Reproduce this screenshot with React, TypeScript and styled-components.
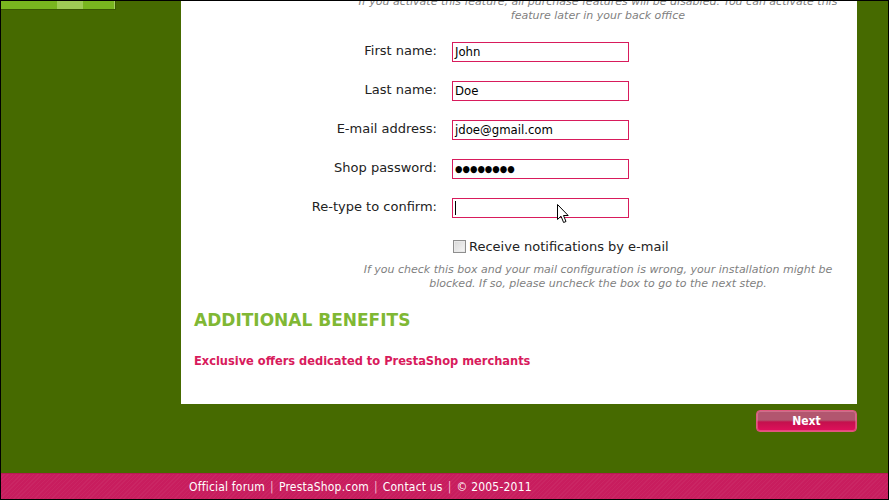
import React from "react";
import styled, { createGlobalStyle } from "styled-components";

const Global = createGlobalStyle`
  html, body { margin: 0; padding: 0; background: #466a00; }
  body { font-family: "DejaVu Sans", sans-serif; }
  * { box-sizing: border-box; }
`;

const Frame = styled.div`
  width: 889px;
  height: 500px;
  border: 1px solid #000;
  display: flex;
  flex-direction: column;
  background: #466a00;
  overflow: hidden;
`;

const Main = styled.div`
  flex: 1;
  display: grid;
  grid-template-columns: 180px 676px 1fr;
  align-items: start;
`;

const Sidebar = styled.div`
  display: flex;
  flex-direction: column;
`;

const StepBar = styled.div`
  width: 115px;
  height: 9px;
  display: flex;
  border-right: 1px solid #3a5800;
  border-bottom: 1px solid #3a5800;
`;

const StepSeg = styled.div<{ $w: number; $light?: boolean }>`
  width: ${(p) => p.$w}px;
  background: ${(p) => (p.$light ? "#9fcb55" : "#79b51f")};
  &:last-child { border-right: 1px solid #a6d060; }
`;

const Center = styled.div`
  display: flex;
  flex-direction: column;
`;

const Panel = styled.div`
  background: #fff;
  height: 409px;
  margin-top: -6px;
  padding: 0 0 0 13px;
  display: flex;
  flex-direction: column;
`;

const Note = styled.p`
  margin: 0 0 0 162px;
  width: 484px;
  text-align: center;
  font-style: italic;
  font-size: 11px;
  line-height: 14px;
  color: #7f7f7f;
`;

const Form = styled.div`
  display: flex;
  flex-direction: column;
  gap: 19px;
  margin-top: 19px;
`;

const Row = styled.div`
  display: flex;
  align-items: center;
  gap: 15px;
  height: 20px;
`;

const Label = styled.label`
  width: 243px;
  text-align: right;
  font-size: 13px;
  color: #222;
  padding-bottom: 3px;
`;

const Input = styled.div`
  position: relative;
  width: 177px;
  height: 20px;
  border: 1px solid #d81b5c;
  padding: 0 2px;
  font-family: "DejaVu Sans Condensed", "DejaVu Sans", sans-serif;
  font-size: 13px;
  line-height: 18px;
  color: #000;
  display: flex;
  align-items: center;
`;

const Dots = styled.span`
  font-size: 9.5px;
  letter-spacing: 0px;
`;

const Caret = styled.span`
  display: block;
  width: 1px;
  height: 14px;
  background: #000;
`;

const Cursor = styled.svg`
  position: absolute;
  left: 104px;
  top: 5px;
`;

const CheckRow = styled.div`
  display: flex;
  align-items: center;
  gap: 3px;
  margin: 21px 0 0 259px;
  font-size: 13px;
  color: #222;
`;

const Box = styled.span`
  width: 13px;
  height: 13px;
  border: 1px solid #8e8e8e;
  background: linear-gradient(135deg, #d8d8d8, #f6f6f6);
  box-shadow: inset 0 0 0 1px #e9e9e9;
`;

const NoteSmall = styled(Note)`
  margin-top: 9px;
`;

const Heading = styled.h2`
  margin: 19px 0 0 0;
  font-size: 17px;
  font-weight: bold;
  color: #80b834;
  line-height: 20px;
`;

const Offer = styled.p`
  margin: 23px 0 0 0;
  font-family: "DejaVu Sans Condensed", "DejaVu Sans", sans-serif;
  font-size: 12.7px;
  font-weight: bold;
  color: #d81b5c;
`;

const ButtonRow = styled.div`
  display: flex;
  justify-content: flex-end;
  margin-top: 6px;
`;

const NextButton = styled.button`
  width: 101px;
  height: 22px;
  border: 1px solid #e0587f;
  border-radius: 4px;
  background: linear-gradient(#b2566f 0 45%, #c4104d 55%, #e0105c 100%);
  color: #fff;
  font-family: "DejaVu Sans Condensed", "DejaVu Sans", sans-serif;
  font-weight: bold;
  font-size: 12px;
  padding: 0 0 1px;
  box-shadow: inset 0 0 0 1px rgba(255, 160, 190, 0.35);
`;

const Footer = styled.div`
  height: 26px;
  background-color: #c81d5e;
  background-image: repeating-linear-gradient(
    -45deg,
    rgba(255, 255, 255, 0.04) 0 1px,
    transparent 1px 3px
  );
  border-top: 1px solid #b61a54;
  padding-left: 188px;
  display: flex;
  align-items: center;
  font-family: "DejaVu Sans Condensed", "DejaVu Sans", sans-serif;
  font-size: 12px;
  letter-spacing: 0.2px;
  color: #fff;
`;

const Sep = styled.span`
  margin: 0 5px;
  color: #f3b7cc;
`;

const fields: { label: string; value: React.ReactNode }[] = [
  { label: "First name:", value: "John" },
  { label: "Last name:", value: "Doe" },
  { label: "E-mail address:", value: "jdoe@gmail.com" },
  { label: "Shop password:", value: <Dots>●●●●●●●●</Dots> },
];

export default function App() {
  return (
    <>
      <Global />
      <Frame>
        <Main>
          <Sidebar>
            <StepBar>
              <StepSeg $w={56} />
              <StepSeg $w={26} $light />
              <StepSeg $w={32} />
            </StepBar>
          </Sidebar>
          <Center>
            <Panel>
              <Note>
                If you activate this feature, all purchase features will be disabled. You can activate this
                feature later in your back office
              </Note>
              <Form>
                {fields.map((f) => (
                  <Row key={f.label}>
                    <Label>{f.label}</Label>
                    <Input>{f.value}</Input>
                  </Row>
                ))}
                <Row>
                  <Label>Re-type to confirm:</Label>
                  <Input>
                    <Caret />
                    <Cursor width="13" height="20" viewBox="0 0 13 20">
                      <path
                        d="M0.5 0.5 L0.5 15.5 L4 12.2 L6.6 18.5 L9 17.5 L6.5 11.5 L11.2 11.5 Z"
                        fill="#fff"
                        stroke="#000"
                        strokeWidth="1"
                        strokeLinejoin="round"
                      />
                    </Cursor>
                  </Input>
                </Row>
              </Form>
              <CheckRow>
                <Box />
                <span>Receive notifications by e-mail</span>
              </CheckRow>
              <NoteSmall>
                If you check this box and your mail configuration is wrong, your installation might be
                blocked. If so, please uncheck the box to go to the next step.
              </NoteSmall>
              <Heading>ADDITIONAL BENEFITS</Heading>
              <Offer>Exclusive offers dedicated to PrestaShop merchants</Offer>
            </Panel>
            <ButtonRow>
              <NextButton>Next</NextButton>
            </ButtonRow>
          </Center>
          <div />
        </Main>
        <Footer>
          Official forum<Sep>|</Sep>PrestaShop.com<Sep>|</Sep>Contact us<Sep>|</Sep>© 2005-2011
        </Footer>
      </Frame>
    </>
  );
}
